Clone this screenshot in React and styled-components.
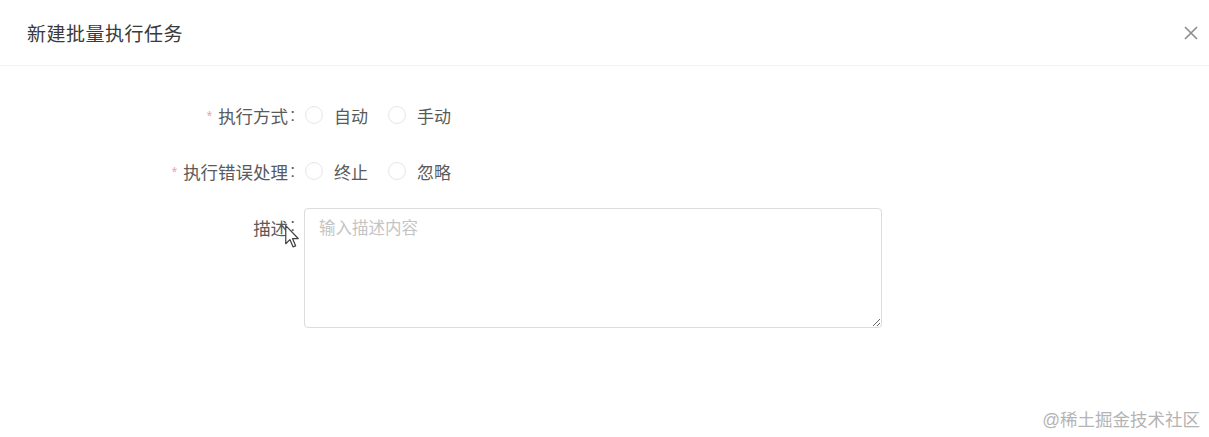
import React from "react";
import styled, { createGlobalStyle } from "styled-components";

const Global = createGlobalStyle`
  html, body { margin: 0; padding: 0; background: #fff; }
  body { font-family: "Liberation Sans", "Noto Sans CJK SC", sans-serif; }
  * { box-sizing: border-box; }
`;

const Modal = styled.div`
  position: relative;
  width: 1209px;
  height: 437px;
  background: #fff;
`;

const Header = styled.div`
  height: 66px;
  display: flex;
  align-items: center;
  justify-content: space-between;
  padding: 0 10px 0 27px;
  border-bottom: 1px solid #f3f3f3;
`;

const Title = styled.div`
  font-size: 19px;
  color: #3a3a3a;
  letter-spacing: 0.5px;
`;

const Close = styled.button`
  border: 0;
  background: none;
  padding: 0;
  width: 16px;
  height: 16px;
  display: flex;
  cursor: pointer;
`;

const Form = styled.div`
  display: grid;
  grid-template-columns: 304px 1fr;
  padding-top: 35px;
  font-size: 17px;
  color: #5a5a5a;
`;

const Label = styled.div`
  display: flex;
  align-items: ${(p) => (p.$top ? "flex-start" : "center")};
  justify-content: flex-end;
  height: ${(p) => (p.$top ? "auto" : "28px")};
  padding-right: 9px;
  padding-top: ${(p) => (p.$top ? "7px" : "0")};
  margin-bottom: ${(p) => p.$mb || 0}px;
  white-space: nowrap;
  font-size: 17.5px;
`;

const Colon = styled.span`
  margin-left: 2px;
`;

const Star = styled.span`
  color: #eaa0aa;
  font-size: 14px;
  margin-right: 6px;
  position: relative;
  top: 1px;
`;

const Control = styled.div`
  display: flex;
  align-items: center;
  height: ${(p) => (p.$auto ? "auto" : "28px")};
  margin-bottom: ${(p) => p.$mb || 0}px;
`;

const RadioItem = styled.label`
  display: flex;
  align-items: center;
  margin-right: 19px;
  color: #5a5a5a;
`;

const Circle = styled.span`
  width: 18px;
  height: 18px;
  border-radius: 50%;
  border: 1px solid #e6e6e6;
  background: #fff;
  margin-right: 11px;
  margin-left: 1px;
`;

const TextArea = styled.textarea`
  width: 578px;
  height: 120px;
  border: 1px solid #dcdcdc;
  border-radius: 4px;
  padding: 6px 14px;
  font-family: inherit;
  font-size: 16.5px;
  color: #5a5a5a;
  outline: none;
  resize: vertical;
  &::placeholder { color: #c4c4c4; }
`;

const Watermark = styled.div`
  position: absolute;
  right: 9px;
  bottom: 6px;
  font-size: 17.5px;
  color: #b4b4b4;
`;

const Cursor = styled.svg`
  position: absolute;
  left: 284px;
  top: 224px;
  pointer-events: none;
`;

function Radio({ children }) {
  return (
    <RadioItem>
      <Circle />
      {children}
    </RadioItem>
  );
}

export default function App() {
  return (
    <>
      <Global />
      <Modal>
        <Header>
          <Title>新建批量执行任务</Title>
          <Close aria-label="close">
            <svg width="16" height="16" viewBox="0 0 16 16">
              <path d="M2 2 L14 14 M14 2 L2 14" stroke="#8c8c8c" strokeWidth="1.6" />
            </svg>
          </Close>
        </Header>
        <Form>
          <Label $mb={28}>
            <Star>*</Star>执行方式<Colon>:</Colon>
          </Label>
          <Control $mb={28}>
            <Radio>自动</Radio>
            <Radio>手动</Radio>
          </Control>
          <Label $mb={23}>
            <Star>*</Star>执行错误处理<Colon>:</Colon>
          </Label>
          <Control $mb={23}>
            <Radio>终止</Radio>
            <Radio>忽略</Radio>
          </Control>
          <Label $top>
            描述<Colon>:</Colon>
          </Label>
          <Control $auto>
            <TextArea placeholder="输入描述内容" />
          </Control>
        </Form>
        <Cursor width="17" height="27" viewBox="0 0 16 26">
          <path
            d="M1.5 1.5 L1.5 19 L5.5 15 L8.5 22 L11 21 L8 14 L13.5 14 Z"
            fill="#fff"
            stroke="#444"
            strokeWidth="1.2"
            strokeLinejoin="round"
          />
        </Cursor>
        <Watermark>@稀土掘金技术社区</Watermark>
      </Modal>
    </>
  );
}
